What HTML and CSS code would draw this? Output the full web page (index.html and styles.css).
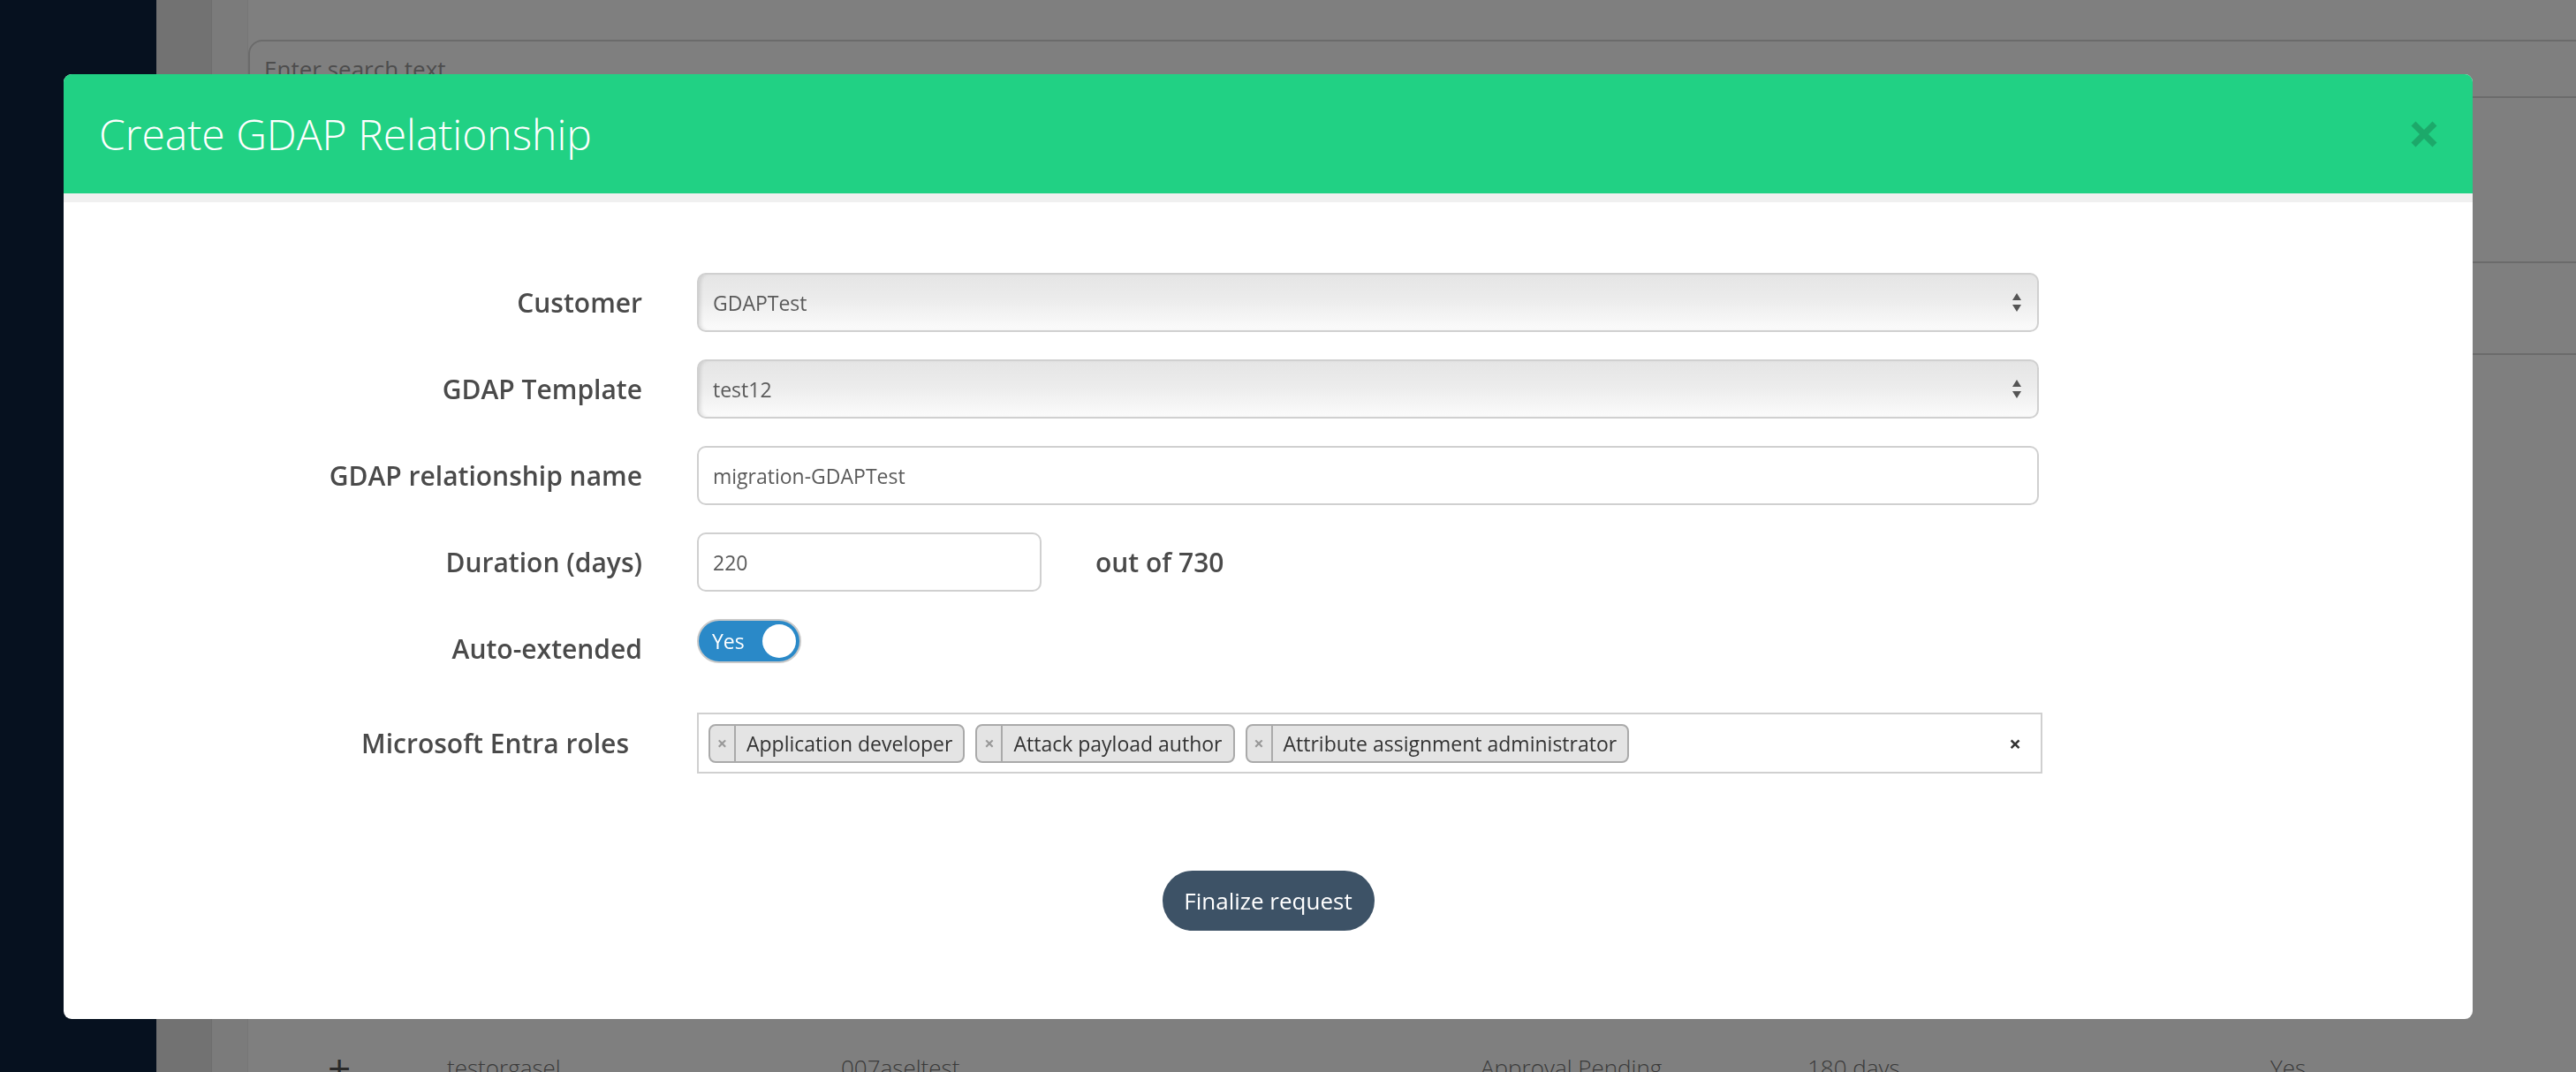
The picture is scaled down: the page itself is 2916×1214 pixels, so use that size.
FILE: index.html
```html
<!DOCTYPE html>
<html>

<head>
    <title>GDAP Relationships</title>
    <link rel="stylesheet" href="styles.css">
</head>

<body>
    <div class="app">
        <aside class="sidebar"></aside>
        <div class="rail"></div>
        <div class="gutter"></div>
        <main class="content">
            <div class="search">Enter search text</div>

            <div class="list">
                <div class="list-head"></div>
                <div class="list-row">
                    <span class="cell cell-expand">+</span>
                    <span class="cell">testorgasel</span>
                    <span class="cell">007aseltest</span>
                    <span class="cell">Approval Pending</span>
                    <span class="cell">180 days</span>
                    <span class="cell">Yes</span>
                </div>
            </div>
        </main>
    </div>

    <div class="backdrop"></div>

    <div class="modal">
        <div class="modal-header">
            <h1 class="modal-title">Create GDAP Relationship</h1>
            <button class="modal-close" type="button">
                <svg width="30" height="30" viewBox="0 0 30 30">
                    <line x1="3" y1="3" x2="27" y2="27" stroke="currentColor" stroke-width="7" />
                    <line x1="27" y1="3" x2="3" y2="27" stroke="currentColor" stroke-width="7" />
                </svg>
            </button>
        </div>

        <form class="modal-body" id="form">
            <div class="form-row">
                <label class="label">Customer</label>
                <div class="select">
                    <span>GDAPTest</span>
                    <svg class="select-arrows" width="10" height="22" viewBox="0 0 10 22">
                        <polygon points="5,0 10,8 0,8" fill="#555" />
                        <polygon points="0,13 10,13 5,21" fill="#555" />
                    </svg>
                </div>
            </div>

            <div class="form-row">
                <label class="label">GDAP Template</label>
                <div class="select">
                    <span>test12</span>
                    <svg class="select-arrows" width="10" height="22" viewBox="0 0 10 22">
                        <polygon points="5,0 10,8 0,8" fill="#555" />
                        <polygon points="0,13 10,13 5,21" fill="#555" />
                    </svg>
                </div>
            </div>

            <div class="form-row">
                <label class="label">GDAP relationship name</label>
                <div class="input">migration-GDAPTest</div>
            </div>

            <div class="form-row">
                <label class="label">Duration (days)</label>
                <div class="inline">
                    <div class="input input-short">220</div>
                    <span class="hint">out of 730</span>
                </div>
            </div>

            <div class="form-row row-toggle">
                <label class="label">Auto-extended</label>
                <div class="toggle">
                    <span class="toggle-text">Yes</span>
                    <span class="toggle-knob"></span>
                </div>
            </div>

            <div class="form-row row-roles">
                <label class="label label-roles">Microsoft Entra roles</label>
                <div class="tags">
                    <span class="tag"><span class="tag-remove">×</span><span class="tag-text">Application developer</span></span>
                    <span class="tag"><span class="tag-remove">×</span><span class="tag-text">Attack payload author</span></span>
                    <span class="tag"><span class="tag-remove">×</span><span class="tag-text">Attribute assignment administrator</span></span>
                    <span class="tags-clear">×</span>
                </div>
            </div>

            <div class="actions">
                <button class="finalize" type="submit">Finalize request</button>
            </div>
        </form>
    </div>
</body>

</html>
```

FILE: styles.css
```css
* {
    box-sizing: border-box;
}

html,
body {
    margin: 0;
    height: 100%;
    overflow: hidden;
}

body {
    font-family: "Open Sans", "Liberation Sans", sans-serif;
    background-color: #ffffff;
    color: #333;
}

/* page behind the dialog */
.app {
    display: flex;
    height: 100vh;
}

.sidebar {
    width: 177px;
    flex-shrink: 0;
    background-color: #0c223e;
}

.rail {
    width: 63px;
    flex-shrink: 0;
    background-color: #e4e4e4;
    border-right: 1px solid #dcdcdc;
}

.gutter {
    width: 41px;
    flex-shrink: 0;
    background-color: #f6f6f6;
    border-right: 1px solid #ececec;
}

.content {
    flex: 1;
    padding-top: 45px;
    margin-right: -60px;
}

.search {
    display: flex;
    align-items: center;
    height: 66px;
    padding: 0 16px;
    border: 2px solid #d6d6d6;
    border-radius: 16px;
    font-size: 26px;
    color: #9a9a9a;
}

.list {
    margin-top: 185px;
    border-top: 2px solid #d6d6d6;
}

.list-head {
    height: 104px;
    border-bottom: 2px solid #d6d6d6;
}

.list-row {
    display: grid;
    grid-template-columns: 135px 446px 724px 370px 524px auto;
    align-items: center;
    height: 104px;
    margin-top: 755px;
    padding-left: 90px;
    font-size: 26px;
    font-weight: 300;
    color: #747474;
}

.cell-expand {
    font-size: 46px;
    font-weight: 400;
    color: #555;
}

.backdrop {
    position: fixed;
    inset: 0;
    background-color: rgba(0, 0, 0, 0.5);
}

/* dialog */
.modal {
    position: fixed;
    top: 84px;
    left: 72px;
    width: 2727px;
    background-color: #ffffff;
    border-radius: 9px;
    overflow: hidden;
}

.modal-header {
    display: flex;
    align-items: center;
    justify-content: space-between;
    height: 145px;
    padding: 0 40px;
    background-color: #21d184;
    border-bottom: 10px solid #f0f0f0;
}

.modal-title {
    margin: 0;
    font-size: 48px;
    font-weight: 300;
    color: #ffffff;
}

.modal-close {
    display: flex;
    padding: 0;
    border: none;
    background: none;
    color: #1ca96a;
    cursor: pointer;
}

.modal-body {
    padding: 80px 0 100px;
}

.form-row {
    display: grid;
    grid-template-columns: 655px 1519px;
    column-gap: 62px;
    align-items: center;
    margin-bottom: 31px;
}

.label {
    text-align: right;
    font-size: 30px;
    font-weight: 600;
    color: #4a4a4a;
}

.select,
.input {
    display: flex;
    align-items: center;
    justify-content: space-between;
    height: 67px;
    padding: 0 18px 0 16px;
    border: 2px solid #d0d0d0;
    border-radius: 10px;
    font-size: 23px;
    color: #5a5a5a;
}

.select {
    background: linear-gradient(#e5e5e5, #ececec 45%, #fbfbfb);
    box-shadow: inset 4px 0 4px -2px rgba(0, 0, 0, 0.12);
}

.input {
    background-color: #ffffff;
}

.inline {
    display: flex;
    align-items: center;
}

.input-short {
    width: 390px;
}

.hint {
    margin-left: 61px;
    font-size: 30px;
    font-weight: 600;
    color: #4a4a4a;
}

.row-toggle {
    height: 67px;
    margin-top: 1px;
}

.row-toggle .toggle {
    align-self: start;
}

.toggle {
    display: flex;
    align-items: center;
    justify-content: space-between;
    width: 118px;
    height: 50px;
    padding: 0 4px 0 15px;
    border: 2px solid #c9c9c9;
    border-radius: 25px;
    background-color: #2a89c8;
}

.toggle-text {
    font-size: 23px;
    color: #ffffff;
}

.toggle-knob {
    width: 38px;
    height: 38px;
    border-radius: 50%;
    background-color: #ffffff;
}

.row-roles {
    margin-top: 39px;
    grid-template-columns: 655px 1523px;
}

.label-roles {
    padding-right: 15px;
}

.tags {
    display: flex;
    align-items: center;
    gap: 12px;
    height: 69px;
    padding: 0 22px 0 11px;
    border: 2px solid #d0d0d0;
}

.tag {
    display: flex;
    align-items: center;
    height: 44px;
    border: 2px solid #aaaaaa;
    border-radius: 8px;
    background-color: #e4e4e4;
    font-size: 23px;
    color: #333;
}

.tag-remove {
    display: flex;
    align-items: center;
    justify-content: center;
    width: 29px;
    height: 100%;
    border-right: 2px solid #aaaaaa;
    font-size: 20px;
    font-weight: 700;
    color: #999;
}

.tag-text {
    padding: 0 12px 0 12px;
}

.tags-clear {
    margin-left: auto;
    font-size: 24px;
    font-weight: 700;
    color: #333;
}

.actions {
    display: flex;
    justify-content: center;
    margin-top: 110px;
}

.finalize {
    width: 240px;
    height: 68px;
    border: none;
    border-radius: 34px;
    background-color: #3d5266;
    font-family: inherit;
    font-size: 26px;
    font-weight: 500;
    color: #ffffff;
    cursor: pointer;
}
```
